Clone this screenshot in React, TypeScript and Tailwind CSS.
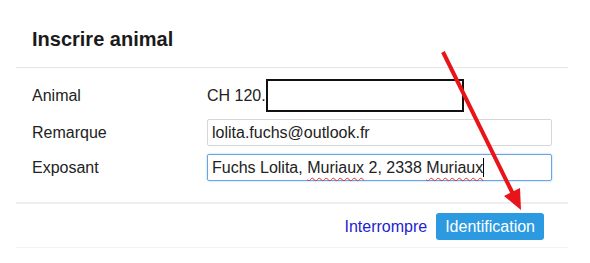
import React from "react";

const Row: React.FC<{ label: string; children: React.ReactNode; className?: string }> = ({ label, children, className }) => (
  <div className={"flex items-center " + (className ?? "")}>
    <div className="w-[175px] shrink-0 text-[16px] text-[#222]">{label}</div>
    <div className="flex-1 flex items-center">{children}</div>
  </div>
);

export default function App() {
  return (
    <div
      className="relative w-[590px] h-[263px] overflow-hidden bg-white text-[#222]"
      style={{ fontFamily: '"Liberation Sans", Arial, sans-serif' }}
    >
      {/* dialog */}
      <div className="ml-[16px] w-[552px] border-b border-[#f3f3f3]">
        <div className="px-[16px] pt-[27px] pb-[16px] border-b border-[#e6e6e6]">
          <h2 className="text-[20px] leading-[24px] font-bold text-[#1a1a1a]">Inscrire animal</h2>
        </div>

        <div className="pl-[16px] pr-[16px] pt-[11px] pb-[21px] flex flex-col gap-[7px] border-b-2 border-[#eeeeee]">
          <Row label="Animal">
            <span className="text-[16px] leading-[20px]">CH 120.</span>
            <div className="w-[198px] h-[33px] border-2 border-[#111]" />
          </Row>
          <Row label="Remarque">
            <div className="w-[345px] h-[27px] border border-[#d6d6d6] rounded-[2px] px-[4px] flex items-center text-[16px]">
              lolita.fuchs@outlook.fr
            </div>
          </Row>
          <Row label="Exposant" className="mt-[1px]">
            <div className="w-[345px] h-[27px] border border-[#6aa6e0] rounded-[2px] px-[4px] flex items-center text-[16px] shadow-[0_0_2px_rgba(80,150,220,0.6)]">
              <span>Fuchs Lolita,&nbsp;</span>
              <span className="underline decoration-wavy decoration-[#e03030] decoration-1 underline-offset-[4px]">Muriaux</span>
              <span>&nbsp;2, 2338&nbsp;</span>
              <span className="underline decoration-wavy decoration-[#e03030] decoration-1 underline-offset-[4px]">Muriaux</span>
              <span className="w-[1px] h-[19px] bg-black" />
            </div>
          </Row>
        </div>

        <div className="flex justify-end items-center gap-[9px] pt-[9px] pb-[7px] pr-[24px]">
          <span className="text-[16px] text-[#2222cf]">Interrompre</span>
          <button className="h-[27px] px-[9px] rounded-[3px] bg-[#2b9ae0] text-white text-[16px]">
            Identification
          </button>
        </div>
      </div>

      {/* annotation arrow */}
      <svg className="absolute inset-0 pointer-events-none" width="590" height="263" viewBox="0 0 590 263">
        <line x1="443" y1="52" x2="513" y2="194" stroke="#e8141a" strokeWidth="4" />
        <polygon points="521,210 504,196 520,188" fill="#e8141a" />
      </svg>
    </div>
  );
}
